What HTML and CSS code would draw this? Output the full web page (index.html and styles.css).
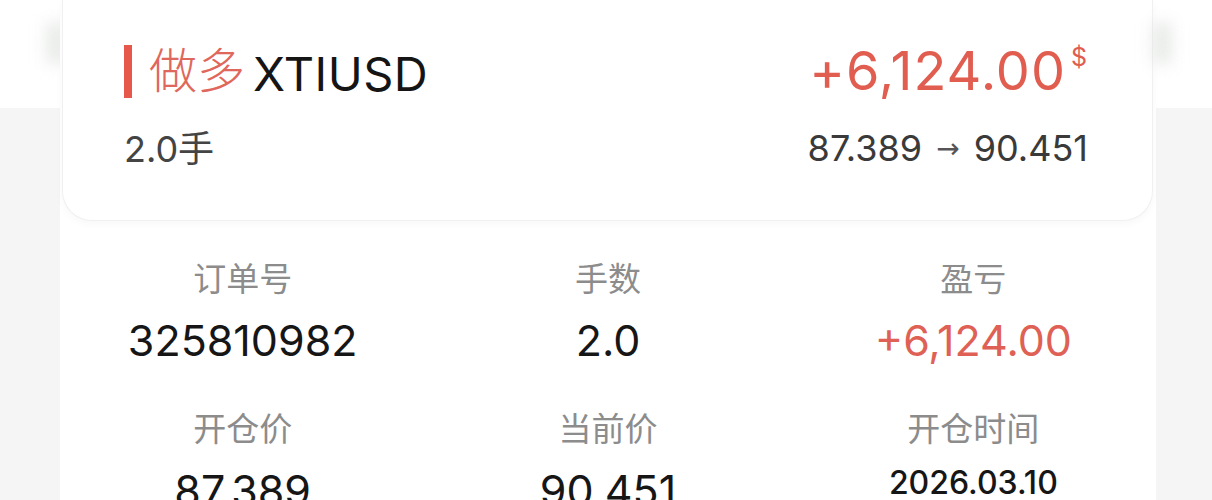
FILE: index.html
```html
<!DOCTYPE html>
<html lang="zh-CN">
<head>
    <meta charset="UTF-8">
    <meta name="viewport" content="width=device-width, initial-scale=1.0">
    <title>持仓详情</title>
    <link rel="stylesheet" href="styles.css">
</head>

<body>
    <div class="page">
        <div class="sheet">
            <div class="summary">
                <div class="summary-row">
                    <div class="symbol">
                        <span class="bar"></span>
                        <span class="side">做多</span>
                        <span class="code">XTIUSD</span>
                    </div>
                    <div class="profit">+6,124.00<span class="unit">$</span></div>
                </div>
                <div class="summary-row sub">
                    <div class="lots">2.0手</div>
                    <div class="prices">87.389 <span class="arrow">→</span> 90.451</div>
                </div>
            </div>

            <div class="details">
                <div class="cell">
                    <div class="label">订单号</div>
                    <div class="value">325810982</div>
                </div>
                <div class="cell">
                    <div class="label">手数</div>
                    <div class="value">2.0</div>
                </div>
                <div class="cell">
                    <div class="label">盈亏</div>
                    <div class="value up">+6,124.00</div>
                </div>
                <div class="cell">
                    <div class="label">开仓价</div>
                    <div class="value">87.389</div>
                </div>
                <div class="cell">
                    <div class="label">当前价</div>
                    <div class="value">90.451</div>
                </div>
                <div class="cell">
                    <div class="label">开仓时间</div>
                    <div class="value date">2026.03.10</div>
                </div>
            </div>
        </div>
    </div>
</body>
</html>
```

FILE: styles.css
```css
body{
    margin: 0;
    font-family: "Inter", "Noto Sans CJK SC", sans-serif;
    background: linear-gradient(#fff 0, #fff 108px, #f5f5f5 108px);
    overflow: hidden;
}

.page{
    position: relative;
    height: 500px;
}

/* blurred edge of the view behind */
.page::before, .page::after{
    content: "";
    position: absolute;
    top: 22px;
    width: 20px;
    height: 42px;
    background: #dfe3df;
    filter: blur(8px);
    opacity: 0.7;
}

.page::before{
    left: 46px;
}

.page::after{
    left: 1152px;
}

.sheet{
    position: relative;
    width: 1096px;
    margin-left: 60px;
    min-height: 500px;
    background: #fff;
}

.summary{
    margin: 0 3px 0 2px;
    padding: 44px 64px 51px 61px;
    border: 1px solid #f0f0f0;
    border-top: none;
    border-radius: 0 0 30px 30px;
    box-shadow: 0 3px 8px rgba(0, 0, 0, 0.03);
    background: #fff;
}

.summary-row{
    display: flex;
    justify-content: space-between;
    align-items: center;
}

.symbol{
    display: flex;
    align-items: center;
    height: 54px;
}

.bar{
    width: 8px;
    height: 53px;
    background: #e5584b;
    margin-right: 17px;
}

.side{
    font-size: 48px;
    line-height: 54px;
    color: #e0675b;
    font-weight: 300;
}

.code{
    font-size: 47px;
    line-height: 54px;
    color: #151515;
    margin-left: 8px;
    padding-top: 6px;
    letter-spacing: 0.5px;
}

.profit{
    font-size: 54px;
    line-height: 54px;
    color: #e05d50;
    position: relative;
    padding-right: 22px;
    letter-spacing: 1px;
}

.unit{
    position: absolute;
    right: 0;
    top: 0;
    font-size: 25px;
    line-height: 26px;
}

.sub{
    margin-top: 30px;
}

.lots, .prices{
    font-size: 36px;
    line-height: 40px;
    color: #444;
}

.prices{
    color: #3a3a3a;
}

.arrow{
    font-family: "DejaVu Sans", sans-serif;
    font-size: 28px;
    vertical-align: 3px;
    margin: 0 4px;
    color: #555;
}

.details{
    display: grid;
    grid-template-columns: repeat(3, 1fr);
    row-gap: 45px;
    padding-top: 38px;
    text-align: center;
}

.label{
    font-size: 33px;
    line-height: 40px;
    color: #8c8c8c;
}

.value{
    margin-top: 17px;
    font-size: 43px;
    line-height: 48px;
    color: #161616;
}

.value.up{
    color: #df6155;
}

.value.date{
    font-size: 32px;
    line-height: 34px;
    font-weight: 500;
}
```
